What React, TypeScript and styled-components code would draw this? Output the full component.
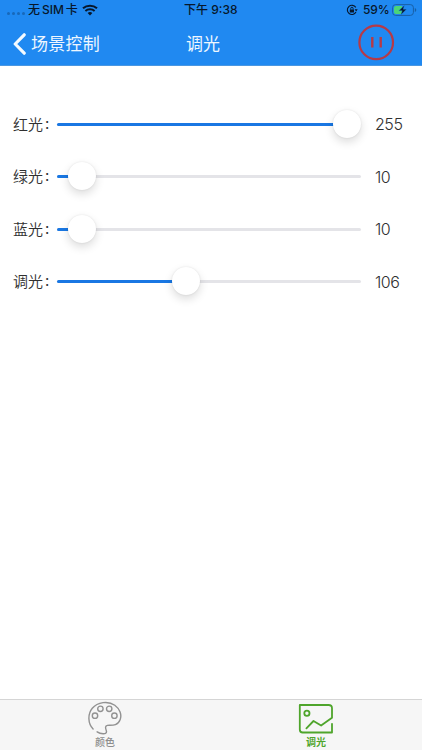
import React, { useState } from "react";
import styled, { createGlobalStyle } from "styled-components";

const GlobalStyle = createGlobalStyle`
  * { box-sizing: border-box; }
  body { margin: 0; background: #fff; font-family: Inter, "Noto Sans CJK SC", sans-serif; }
`;

const Screen = styled.div`
  display: flex;
  flex-direction: column;
  width: 422px;
  height: 750px;
  overflow: hidden;
  background: #fff;
`;

const Header = styled.header`
  height: 66px;
  background: #2089f1;
  border-bottom: 1px solid #4a97e2;
`;

const StatusBar = styled.div`
  display: grid;
  grid-template-columns: 184px 1fr auto;
  align-items: center;
  height: 20px;
  padding-right: 5px;
  color: #07172b;
  font-size: 12px;
  font-weight: 500;
  line-height: 20px;
  white-space: nowrap;
`;

const StatusGroup = styled.div`
  display: flex;
  align-items: center;
`;

const SignalDots = styled.div`
  display: flex;
  gap: 2px;
  margin: 7px 3px 0 7px;
  i { width: 3px; height: 3px; border-radius: 50%; background: #1868b9; }
`;

const Carrier = styled.span`
  width: 50px;
  margin-right: 4px;
  word-spacing: -1.3px;
`;

const Percent = styled.span`
  width: 26px;
  margin: 0 3px 0 5px;
  letter-spacing: -0.1px;
`;

const NavBar = styled.div`
  display: grid;
  grid-template-columns: 186px 1fr 64px;
  align-items: center;
  height: 45px;
  color: #eef7ff;
  font-size: 17px;
  line-height: 24px;
`;

const Title = styled.span`
  padding-top: 2px;
`;

const BackButton = styled.button`
  display: flex;
  align-items: center;
  gap: 5px;
  padding: 2px 0 0 13px;
  border: 0;
  background: none;
  color: inherit;
  font: inherit;
  letter-spacing: 0.25px;
`;

const PauseButton = styled.button`
  display: flex;
  padding: 0;
  border: 0;
  background: none;
`;

const Sliders = styled.main`
  flex: 1;
  padding-top: 32px;
`;

const SliderRow = styled.div`
  display: grid;
  grid-template-columns: 44px 304px 1fr;
  align-items: center;
  height: 52.5px;
  padding-left: 13px;
  color: #303030;
  font-size: 15px;
`;

const Label = styled.span`
  display: flex;
  padding-top: 1px;
  line-height: 22px;
  font-weight: 350;
  white-space: nowrap;
`;

const Colon = styled.span`
  margin: -1px 0 0 2px;
  font-family: Inter, sans-serif;
  font-weight: 400;
`;

const Value = styled.span`
  padding-left: 14px;
  font-size: 16px;
  font-weight: 300;
  line-height: 20px;
  letter-spacing: -0.45px;
`;

const Track = styled.div`
  position: relative;
  height: 3px;
  border-radius: 2px;
  background: #e4e4e8;
`;

const Fill = styled.div`
  height: 3px;
  border-radius: 2px;
  background: #1977e3;
`;

const Thumb = styled.div`
  position: absolute;
  top: -13px;
  width: 28px;
  height: 28px;
  border-radius: 50%;
  background: #fff;
  box-shadow: 0 4px 10px rgba(0, 0, 0, 0.14), 0 0 2px rgba(0, 0, 0, 0.1);
`;

const TabBar = styled.nav`
  display: grid;
  grid-template-columns: 1fr 1fr;
  height: 51px;
  border-top: 1px solid #d5d5d5;
  background: #f6f6f6;
`;

const Tab = styled.button<{ $active?: boolean }>`
  display: flex;
  flex-direction: column;
  align-items: center;
  padding: 1px 1px 0 0;
  border: 0;
  background: none;
  color: ${(p) => (p.$active ? "#4fa52c" : "#8d8d8d")};
  font-family: inherit;
  font-size: 10px;
  font-weight: ${(p) => (p.$active ? 700 : 500)};
  line-height: 14px;
`;

const WifiIcon = () => (
  <svg width="16" height="12" viewBox="0 0 16 12" fill="none" stroke="#07172b">
    <path d="M1 4.3C5 .8 11 .8 15 4.3" strokeWidth="2.1" />
    <path d="M3.4 7C6 4.8 10 4.8 12.6 7" strokeWidth="2" />
    <path d="M8 11.5 5.6 9Q8 7.2 10.4 9Z" fill="#07172b" stroke="none" />
  </svg>
);

const LockIcon = () => (
  <svg width="12" height="12" viewBox="0 0 12 12" fill="none" stroke="#07172b">
    <path d="M9.8 3.4A4.6 4.6 0 1 0 10 8.1" strokeWidth="1.1" />
    <path d="M8.6 5.3h3.1L10.2 7.4Z" fill="#07172b" stroke="none" />
    <rect x="3.8" y="5.4" width="4.2" height="3.2" rx=".4" fill="#07172b" stroke="none" />
    <path d="M4.7 5.6V4.5a1.2 1.2 0 0 1 2.4 0v1.1" strokeWidth=".9" />
  </svg>
);

const BatteryIcon = () => (
  <svg width="25" height="12" viewBox="0 0 25 12" fill="none">
    <rect x=".6" y=".6" width="20.8" height="10.8" rx="3" stroke="#185fa5" />
    <path d="M4 2h6v8H4a2 2 0 0 1-2-2V4a2 2 0 0 1 2-2Z" fill="#4bd477" />
    <path d="M22.8 4v4q1.5-.5 1.5-2t-1.5-2Z" fill="#185fa5" />
    <path d="M12.5 1.2 6.8 6.7h3.4L8.7 11l5.8-5.8h-3.3Z" fill="#07172b" stroke="#2089f1" strokeWidth=".4" />
  </svg>
);

const ChevronIcon = () => (
  <svg width="13" height="22" viewBox="0 0 13 22" fill="none">
    <path d="M11.2 1.8 2.2 11l9 9.2" stroke="#f4faff" strokeWidth="3.2" strokeLinecap="round" strokeLinejoin="round" />
  </svg>
);

const PauseIcon = () => (
  <svg width="37" height="37" viewBox="0 0 37 37" fill="none" stroke="#b63a47">
    <circle cx="18.2" cy="18.4" r="16.8" strokeWidth="2.2" />
    <path d="M14.3 13v10.6M22.7 13v10.6" strokeWidth="2.4" />
  </svg>
);

const PaletteIcon = () => (
  <svg width="34" height="34" viewBox="0 0 34 34" fill="none" stroke="#929292" strokeWidth="1.4" strokeLinecap="round">
    <path d="M5.1 28C-.3 22.6-.4 13 4.3 7.3 9.5.9 20.3-.4 26.8 4.2c5.2 3.7 7.1 9.8 5.4 14.2-2.8 7.5-9.7 5.5-12.8 6-3.3.7-1.2 4-.9 6.2.2 3.3-6.2 2.2-9.4.2" />
    <circle cx="7" cy="14.7" r="2.7" />
    <circle cx="12.4" cy="7.8" r="2.7" />
    <circle cx="21.2" cy="7.8" r="2.7" />
    <circle cx="26.4" cy="14.7" r="2.7" />
  </svg>
);

const PictureIcon = () => (
  <svg width="36" height="34" viewBox="0 0 36 34" fill="none" stroke="#4fa52c" strokeWidth="1.8" strokeLinecap="round" strokeLinejoin="round">
    <path d="M34 22.8v8.7H4.7Q1.8 31.5 1.8 28.5V4H30.5Q34 4 34 7.2v9.5l-10.9 7.9-7.6-4.6-7.1 7.3" />
    <circle cx="8.9" cy="12.3" r="2.6" />
  </svg>
);

const channels = [
  { label: "红光", value: 255 },
  { label: "绿光", value: 10 },
  { label: "蓝光", value: 10 },
  { label: "调光", value: 106 },
];

const Slider = ({ value }: { value: number }) => {
  const center = 14 + (value / 255) * 276;
  return (
    <Track role="slider" aria-valuemin={0} aria-valuemax={255} aria-valuenow={value}>
      <Fill style={{ width: center }} />
      <Thumb style={{ left: center - 14 }} />
    </Track>
  );
};

export default function App() {
  const [tab, setTab] = useState("dimming");
  return (
    <>
      <GlobalStyle />
      <Screen>
        <Header>
          <StatusBar>
            <StatusGroup>
              <SignalDots><i /><i /><i /><i /></SignalDots>
              <Carrier>无 SIM 卡</Carrier>
              <WifiIcon />
            </StatusGroup>
            <span>下午 9:38</span>
            <StatusGroup>
              <LockIcon />
              <Percent>59%</Percent>
              <BatteryIcon />
            </StatusGroup>
          </StatusBar>
          <NavBar>
            <BackButton><ChevronIcon />场景控制</BackButton>
            <Title>调光</Title>
            <PauseButton aria-label="暂停"><PauseIcon /></PauseButton>
          </NavBar>
        </Header>
        <Sliders>
          {channels.map(({ label, value }) => (
            <SliderRow key={label}>
              <Label>{label}<Colon>:</Colon></Label>
              <Slider value={value} />
              <Value>{value}</Value>
            </SliderRow>
          ))}
        </Sliders>
        <TabBar>
          <Tab $active={tab === "color"} onClick={() => setTab("color")}><PaletteIcon />颜色</Tab>
          <Tab $active={tab === "dimming"} onClick={() => setTab("dimming")}><PictureIcon />调光</Tab>
        </TabBar>
      </Screen>
    </>
  );
}
